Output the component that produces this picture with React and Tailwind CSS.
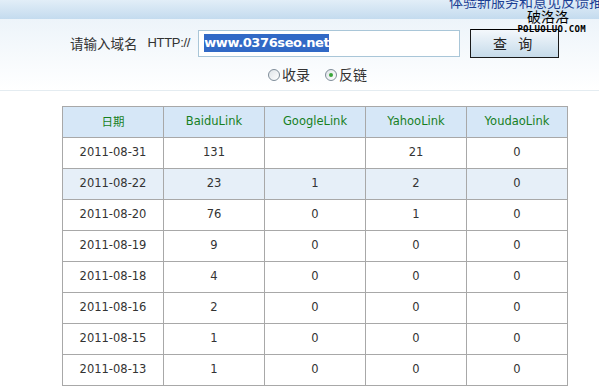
import { useState } from "react";

const rows = [
  { date: "2011-08-31", baidu: "131", google: "", yahoo: "21", youdao: "0" },
  { date: "2011-08-22", baidu: "23", google: "1", yahoo: "2", youdao: "0", hl: true },
  { date: "2011-08-20", baidu: "76", google: "0", yahoo: "1", youdao: "0" },
  { date: "2011-08-19", baidu: "9", google: "0", yahoo: "0", youdao: "0" },
  { date: "2011-08-18", baidu: "4", google: "0", yahoo: "0", youdao: "0" },
  { date: "2011-08-16", baidu: "2", google: "0", yahoo: "0", youdao: "0" },
  { date: "2011-08-15", baidu: "1", google: "0", yahoo: "0", youdao: "0" },
  { date: "2011-08-13", baidu: "1", google: "0", yahoo: "0", youdao: "0" },
];

const cjk = "font-['SimSun','Noto_Sans_CJK_SC',sans-serif]";

export default function App() {
  const [mode, setMode] = useState("link");

  return (
    <div className="relative w-[599px] h-[391px] overflow-hidden bg-white font-['DejaVu_Sans','Noto_Sans_CJK_SC',sans-serif] text-[#333]">
      {/* top band */}
      <div className="h-[19px] bg-gradient-to-b from-[#e2eef8] to-[#c4dbee] flex justify-end items-end overflow-hidden">
        <span className={`${cjk} text-[14px] leading-[14px] text-[#1c3f94] whitespace-nowrap mb-[11px] -mr-[4px]`}>
          体验新服务和意见反馈推
        </span>
      </div>

      {/* search */}
      <div className="h-[72px] bg-gradient-to-b from-[#edf4fa] to-white border-b border-[#e4ecf1] pt-[10px]">
        <div className="flex items-center pl-[70px] h-[28px]">
          <span className={`${cjk} text-[13.5px] text-[#333]`}>请输入域名</span>
          <span className="ml-[10px] text-[13px] font-['Liberation_Sans',sans-serif] text-[#333] tracking-[-0.3px]">HTTP://</span>
          <div className="ml-[8px] w-[262px] h-[27px] border border-[#a9c6d8] bg-white flex items-center pl-[5px]">
            <span className="bg-[#3169c6] text-white font-bold text-[13px] leading-[18px] font-['DejaVu_Sans',sans-serif] tracking-[-0.4px]">
              www.0376seo.net
            </span>
          </div>
          <button className={`${cjk} ml-[10px] w-[89px] h-[29px] border border-[#1a1a1a] bg-gradient-to-b from-[#f4f8fc] to-[#c6dbea] text-[14px] text-[#222] tracking-[4px]`}>
            查 询
          </button>
        </div>
        <div className={`${cjk} flex items-center pl-[268px] mt-[7px] text-[14px] text-[#333]`}>
          <button onClick={() => setMode("index")} className="flex items-center">
            <span className="w-[12px] h-[12px] rounded-full border border-[#7f8d99] bg-gradient-to-br from-[#dfe4e8] to-white flex items-center justify-center">
              {mode === "index" && <span className="w-[4px] h-[4px] rounded-full bg-[#3aa53a]" />}
            </span>
            <span className="ml-[2px]">收录</span>
          </button>
          <button onClick={() => setMode("link")} className="flex items-center ml-[15px]">
            <span className="w-[12px] h-[12px] rounded-full border border-[#7f8d99] bg-gradient-to-br from-[#dfe4e8] to-white flex items-center justify-center">
              {mode === "link" && <span className="w-[4px] h-[4px] rounded-full bg-[#3aa53a]" />}
            </span>
            <span className="ml-[2px]">反链</span>
          </button>
        </div>
      </div>

      {/* watermark */}
      <div className="absolute left-[471px] top-[9px] flex flex-col items-end w-[115px]">
        <span className={`${cjk} text-[14px] leading-[14px] text-black mr-[17px]`}>破洛洛</span>
        <div className="flex items-center mt-[2px] w-full">
          <div className="flex-1 h-[1px] bg-black" />
          <span className="font-['DejaVu_Sans_Mono',monospace] font-bold text-[9px] leading-[9px] text-black tracking-[0.3px]">
            POLUOLUO.COM
          </span>
        </div>
      </div>

      {/* table */}
      <table className="ml-[62px] mt-[15px] border-collapse text-[11.5px] text-center">
        <thead>
          <tr className="bg-[#d6e7f7] text-[#17801e]">
            <th className="w-[101px] h-[31px] border border-[#a8a8a8] font-normal"><span className={cjk}>日期</span></th>
            <th className="w-[101px] h-[31px] border border-[#a8a8a8] font-normal">BaiduLink</th>
            <th className="w-[101px] h-[31px] border border-[#a8a8a8] font-normal">GoogleLink</th>
            <th className="w-[101px] h-[31px] border border-[#a8a8a8] font-normal">YahooLink</th>
            <th className="w-[101px] h-[31px] border border-[#a8a8a8] font-normal">YoudaoLink</th>
          </tr>
        </thead>
        <tbody>
          {rows.map((r) => (
            <tr key={r.date} className={r.hl ? "bg-[#e6eff8]" : "bg-white"}>
              <td className="h-[31px] border border-[#a8a8a8]">{r.date}</td>
              <td className="h-[31px] border border-[#a8a8a8]">{r.baidu}</td>
              <td className="h-[31px] border border-[#a8a8a8]">{r.google}</td>
              <td className="h-[31px] border border-[#a8a8a8]">{r.yahoo}</td>
              <td className="h-[31px] border border-[#a8a8a8]">{r.youdao}</td>
            </tr>
          ))}
        </tbody>
      </table>
    </div>
  );
}
